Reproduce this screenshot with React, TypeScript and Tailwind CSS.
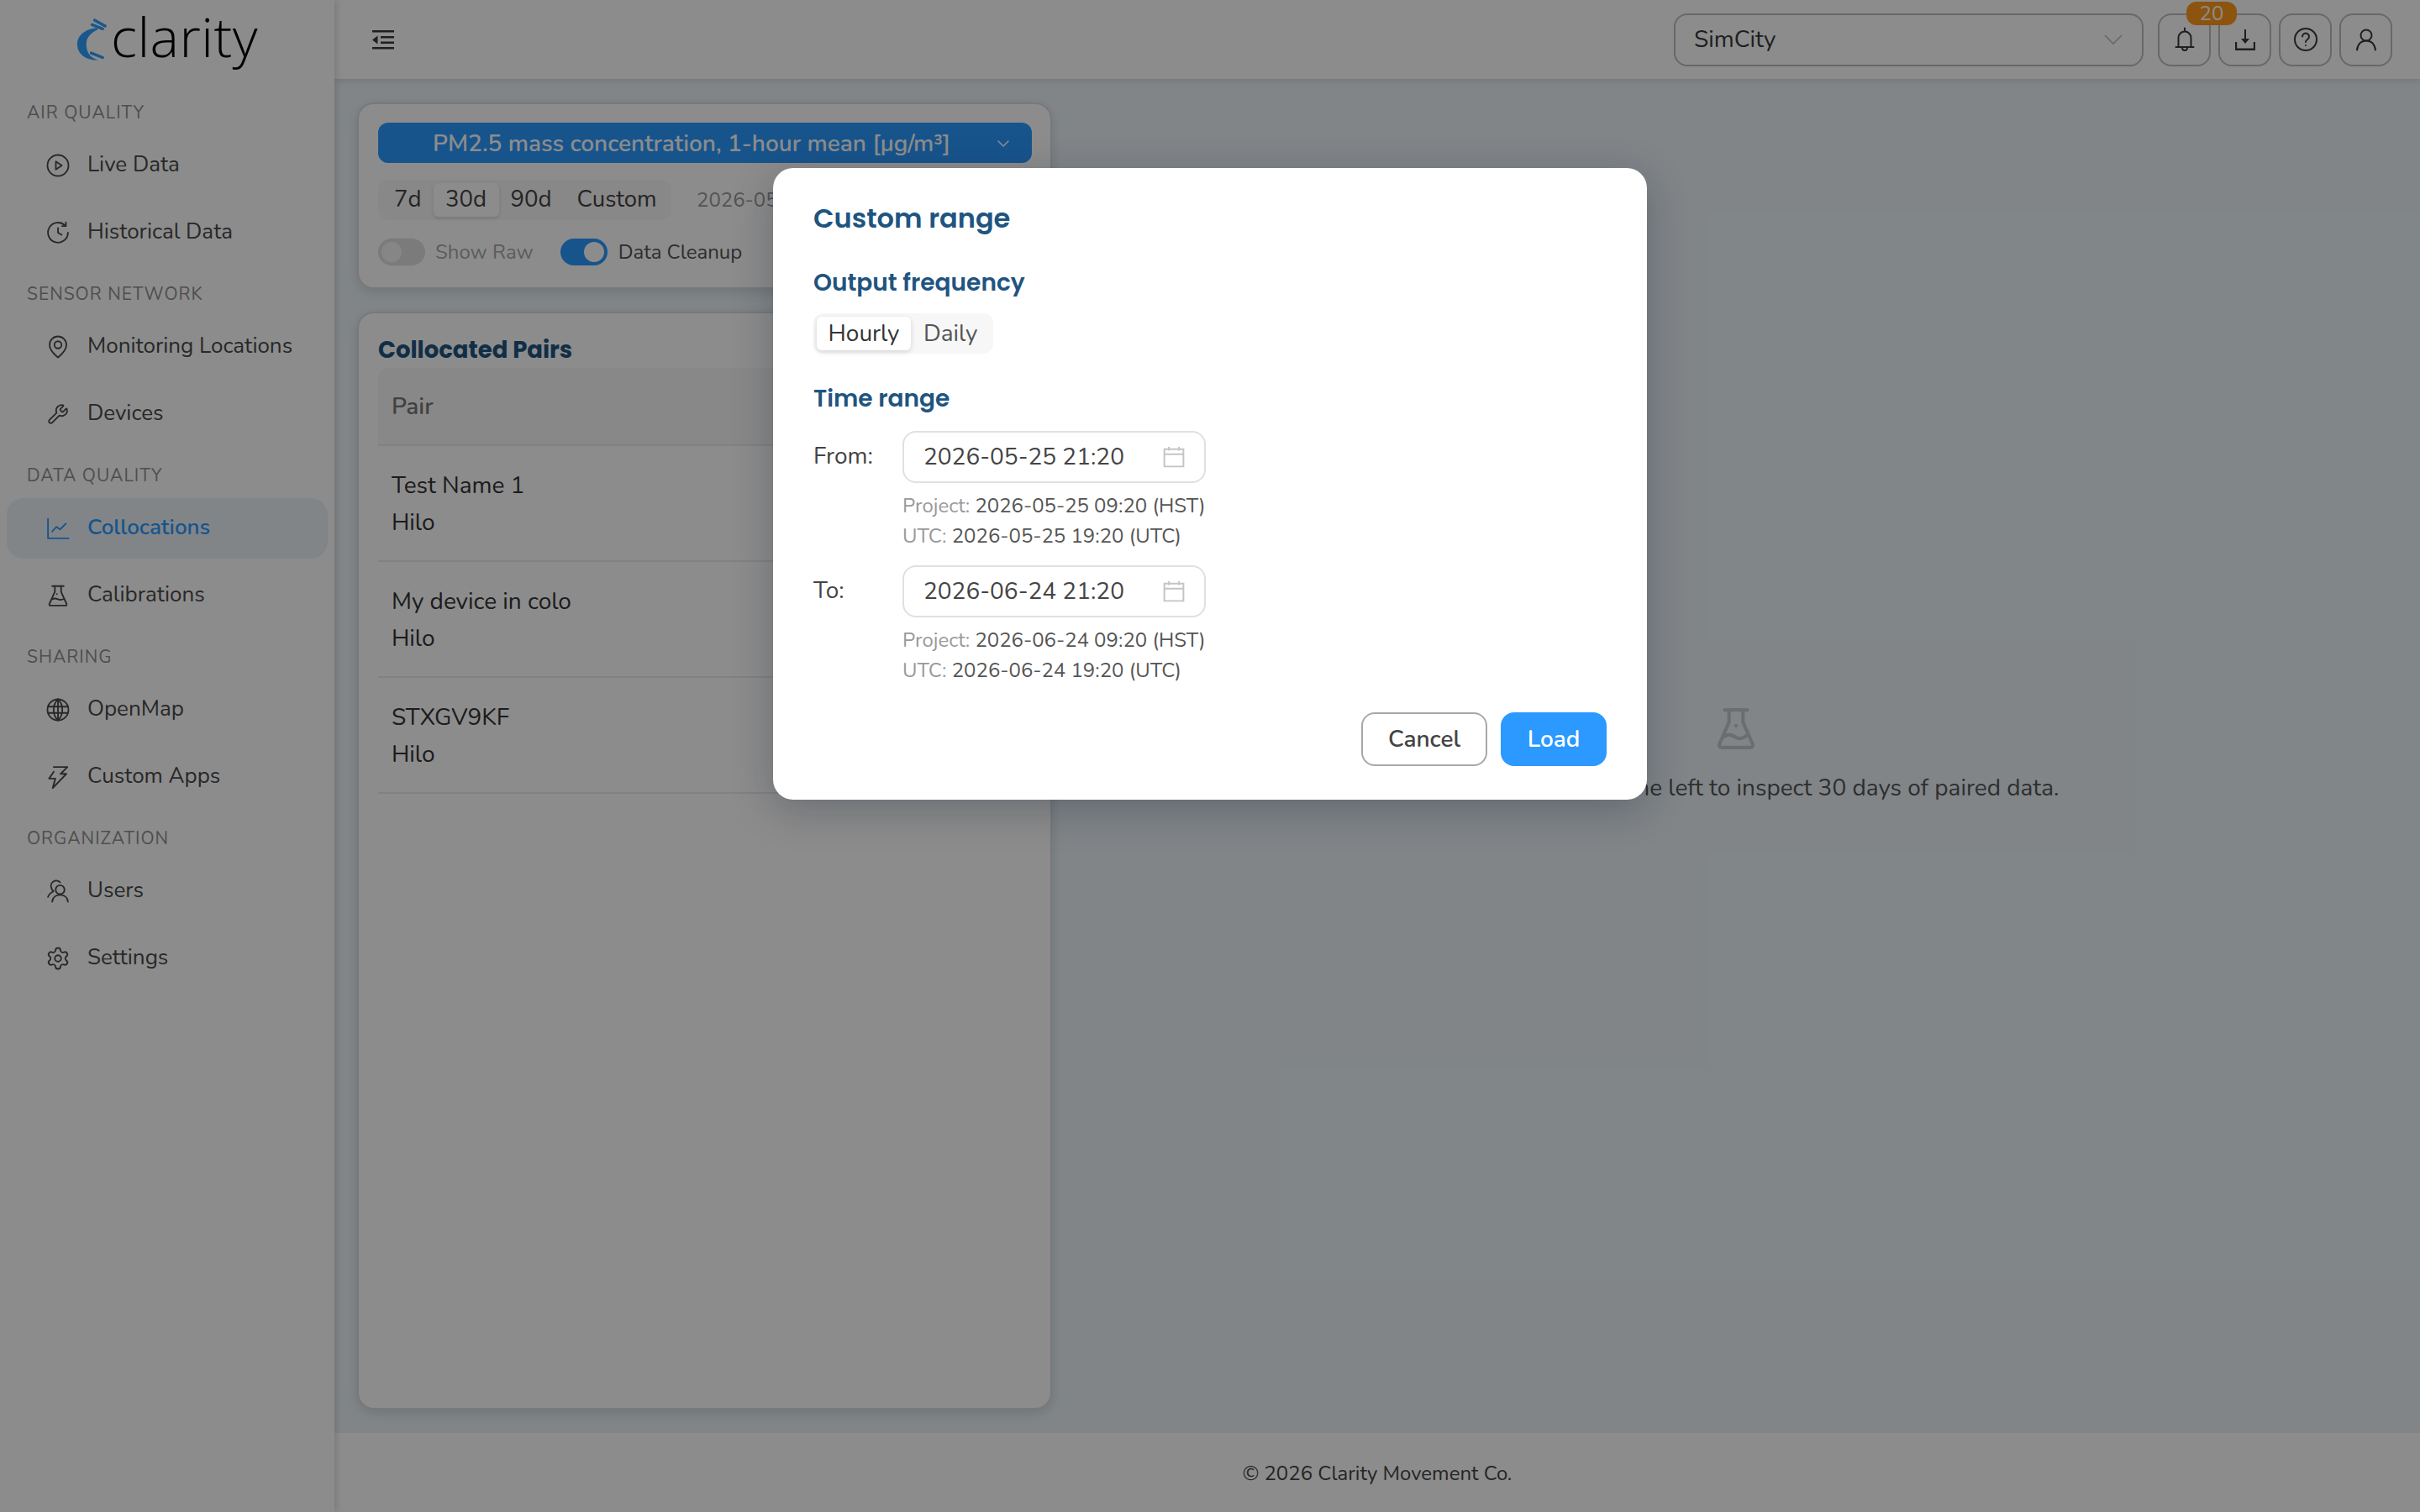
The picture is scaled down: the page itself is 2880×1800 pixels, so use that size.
import { ChevronDown, Settings, Wrench } from "lucide-react";

const nav = [
  { label: "AIR QUALITY", items: [{ name: "Live Data", icon: "play" }, { name: "Historical Data", icon: "history" }] },
  { label: "SENSOR NETWORK", items: [{ name: "Monitoring Locations", icon: "pin" }, { name: "Devices", icon: "tool" }] },
  { label: "DATA QUALITY", items: [{ name: "Collocations", icon: "chart", active: true }, { name: "Calibrations", icon: "flask" }] },
  { label: "SHARING", items: [{ name: "OpenMap", icon: "globe" }, { name: "Custom Apps", icon: "bolt" }] },
  { label: "ORGANIZATION", items: [{ name: "Users", icon: "users" }, { name: "Settings", icon: "gear" }] },
];

function NavIcon({ name }: { name: string }) {
  const common = { width: 30, height: 30, viewBox: "0 0 24 24", fill: "none", stroke: "currentColor", strokeWidth: 1.5, strokeLinecap: "round" as const, strokeLinejoin: "round" as const };
  switch (name) {
    case "play":
      return <svg {...common}><circle cx="12" cy="12" r="10" /><path d="M10 8.200v7.600l5.600-3.800z" /></svg>;
    case "history":
      return <svg {...common}><path d="M21.500 12a9.500 9.500 0 1 1-3-7" /><path d="M19.500 2.200v3.500h-3.500" /><path d="M12 7.500V12l3.500 2" /></svg>;
    case "pin":
      return <svg {...common}><path d="M12 22c-1-1-8-5.800-8-12a8 8 0 0 1 16 0c0 6.200-7 11-8 12z" /><circle cx="12" cy="10" r="3.400" /></svg>;
    case "tool":
      return <Wrench size={26} strokeWidth={1.7} className="mx-[2px] -scale-x-100 rotate-90" />;
    case "chart":
      return <svg {...common}><path d="M2.500 3v18.500H22" /><path d="M6.500 15l4-4.500 3.500 2.500 5.500-5.500" /></svg>;
    case "flask":
      return <svg {...common}><path d="M6.500 3h11" /><path d="M9 3v5.500L3.800 20c-.3.900.2 1.500 1 1.500h14.400c.8 0 1.300-.6 1-1.500L15 8.500V3" /><path d="M6.500 15.500c2-1.300 3.500-.8 5.500 0s3.500.8 5.500-.3" /><path d="M11 10.500v.1" /></svg>;
    case "globe":
      return <svg {...common}><circle cx="12" cy="12" r="10" /><path d="M2.500 9h19M2.500 15h19M12 2v20" /><path d="M12 2c-5.500 5-5.500 15 0 20M12 2c5.500 5 5.500 15 0 20" /></svg>;
    case "bolt":
      return <svg {...common}><path d="M8 2.500h13L14.500 9H20L7 22.500l2.500-9H3.500L8 7" /></svg>;
    case "users":
      return <svg {...common}><circle cx="14" cy="10.500" r="4.200" /><path d="M6.500 22c.5-4 3.500-6.500 7.500-6.500s7 2.500 7.500 6.500" /><path d="M14 3.500A5 5 0 0 0 5.800 9c.1 1.300 1 2.300 2 3C5 13.500 3 15.500 2.500 17.500" /></svg>;
    default:
      return <Settings size={30} strokeWidth={1.5} />;
  }
}

function Sidebar() {
  return (
    <aside className="w-[398px] shrink-0 bg-white shadow-[2px_0_8px_rgba(0,0,0,0.15)] z-10">
      <div className="h-[109px] flex items-start pl-[90px]">
        <svg width="42" height="56" viewBox="0 0 43 56" className="mt-[20px]">
          <path d="M26 13C12 14 2 22 2 33C2 45 14 53 28 52C18 50 13 42 13 33C13 25 18 19 27 15Z" fill="#2e9fff" />
          <path d="M23 3.500L36 10.500M20 9L33 14M19 43.500L33 49" fill="none" stroke="#2e9fff" strokeWidth="3.500" strokeLinecap="round" />
        </svg>
        <span className="font-['Open_Sans',sans-serif] font-light text-[65px] leading-[72px] text-black tracking-[0.5px] mt-[7px]">clarity</span>
      </div>
      {nav.map((group) => (
        <div key={group.label} className="mb-[12px]">
          <div className="h-[52px] flex items-center pl-[32px] text-[21px] tracking-[1px] text-[#8f8f8f]">{group.label}</div>
          <div className="flex flex-col gap-[8px]">
            {group.items.map((item: { name: string; icon: string; active?: boolean }) => (
              <div
                key={item.name}
                className={`mx-[8px] h-[72px] rounded-[20px] flex items-center pl-[46px] gap-[20px] text-[26px] ${item.active ? "bg-[#ebf3f7] text-[#2b99ff] font-semibold" : "text-[#4a4a4a]"}`}
              >
                <NavIcon name={item.icon} />
                <span className="pb-[3px]">{item.name}</span>
              </div>
            ))}
          </div>
        </div>
      ))}
    </aside>
  );
}

function IconButton({ children }: { children: React.ReactNode }) {
  return (
    <button className="w-[63px] h-[63px] rounded-[16px] border-2 border-[#bdbdbd] flex items-center justify-center text-[#3a3a3a]">
      {children}
    </button>
  );
}

function Topbar() {
  return (
    <header className="h-[94px] shrink-0 bg-white shadow-[0_2px_8px_rgba(0,0,0,0.12)] flex items-center pl-[45px] pr-[33px] z-[5]">
      <svg width="26" height="24" viewBox="0 0 26 24" fill="#3a3a3a">
        <path d="M0 1h26v2.500H0zM10 8h16v2.500H10zM10 14.500h16v2.500H10zM0 21h26v2.500H0zM0 12.500L6.500 7.500v10z" />
      </svg>
      <div className="ml-auto w-[559px] h-[63px] rounded-[16px] border-2 border-[#bdbdbd] flex items-center justify-between pl-[22px] pr-[23px] text-[28px] text-[#3a3a3a]">
        <span>SimCity</span>
        <svg width="22" height="12" viewBox="0 0 22 12" fill="none" stroke="#bdbdbd" strokeWidth="1.600"><path d="M1 1l10 10L21 1" /></svg>
      </div>
      <div className="relative flex gap-[9px] ml-[17px]">
        <IconButton>
          <svg width="24" height="30" viewBox="0 0 24 30" fill="none" stroke="currentColor" strokeWidth="2" strokeLinecap="round" strokeLinejoin="round">
            <path d="M12 1.500v3M4.500 24V13a7.500 7.500 0 0 1 15 0v11M1.500 24h21M9 25a3 3 0 0 0 6 0" />
          </svg>
        </IconButton>
        <IconButton>
          <svg width="26" height="26" viewBox="0 0 26 26" fill="currentColor">
            <path d="M12 1h2v11h4l-5 6-5-6h4zM1 16h2.200v7.500h19.600V16H25v10H1z" />
          </svg>
        </IconButton>
        <IconButton>
          <svg width="30" height="30" viewBox="0 0 30 30" fill="none" stroke="currentColor" strokeWidth="2" strokeLinecap="round" strokeLinejoin="round">
            <circle cx="15" cy="15" r="13" />
            <path d="M11 11.500a4 4 0 1 1 6 3.500c-1.300.8-2 1.500-2 3M15 22v.1" />
          </svg>
        </IconButton>
        <IconButton>
          <svg width="26" height="27" viewBox="0 0 26 27" fill="none" stroke="currentColor" strokeWidth="2" strokeLinecap="round" strokeLinejoin="round">
            <circle cx="13" cy="8" r="6.500" />
            <path d="M2 25.500c1-7 5-11 11-11s10 4 11 11" />
          </svg>
        </IconButton>
        <span className="absolute left-[34px] top-[-14px] w-[60px] h-[28px] rounded-[12px] bg-[#ff9a1a] text-white text-[24px] leading-[28px] text-center">20</span>
      </div>
    </header>
  );
}

function Toggle({ on }: { on?: boolean }) {
  return (
    <span className={`w-[56px] h-[32px] rounded-full flex items-center px-[4px] ${on ? "bg-[#2b99ff] justify-end" : "bg-[#e0e0e0]"}`}>
      <span className={`w-[24px] h-[24px] rounded-full ${on ? "bg-white" : "bg-[#f5f5f5]"}`} />
    </span>
  );
}

function LeftColumn() {
  return (
    <div className="w-[827px] shrink-0 flex flex-col gap-[27px]">
      <section className="h-[222px] rounded-[20px] bg-white border-2 border-[#dcdcdc] shadow-[0_4px_14px_rgba(0,30,60,0.14)] pl-[23px] pr-[22px] pt-[22px]">
        <div className="h-[48px] rounded-[12px] bg-[#2b99ff] flex items-center justify-between pl-[65px] pr-[22px] pt-[2px] text-white font-semibold text-[28px]">
          <span>PM2.5 mass concentration, 1-hour mean [μg/m³]</span>
          <ChevronDown size={24} strokeWidth={1.600} />
        </div>
        <div className="mt-[20px] flex items-center">
          <div className="h-[48px] w-[349px] rounded-[12px] bg-[#f7f7f7] flex items-center text-[27.5px] text-[#444] shrink-0">
            <span className="ml-[19px]">7d</span>
            <span className="ml-[14px] w-[78px] h-[40px] rounded-[6px] bg-white shadow-[0_2px_4px_rgba(0,0,0,0.12)] flex items-center justify-center">30d</span>
            <span className="ml-[14px]">90d</span>
            <span className="ml-[30px]">Custom</span>
          </div>
          <span className="ml-[30px] text-[24px] text-[#999] whitespace-nowrap">2026-05-</span>
        </div>
        <div className="mt-[20px] flex items-center text-[24px]">
          <Toggle />
          <span className="ml-[12px] text-[#a8a8a8]">Show Raw</span>
          <span className="ml-[32px]"><Toggle on /></span>
          <span className="ml-[13px] text-[#555]">Data Cleanup</span>
        </div>
      </section>
      <section className="flex-1 rounded-[20px] bg-white border-2 border-[#dcdcdc] shadow-[0_4px_14px_rgba(0,30,60,0.14)] pl-[23px] pr-[22px]">
        <h2 className="font-['Poppins','Inter',sans-serif] font-bold text-[27.5px] leading-[36px] pt-[26px] text-[#205480] box-content">Collocated Pairs</h2>
        <div className="mt-[3px] h-[93px] rounded-t-[12px] bg-[#f7f7f7] border-b-2 border-[#ececec] pl-[16px] pt-[26px] text-[28px] leading-[40px] font-semibold text-[#777]">Pair</div>
        {["Test Name 1", "My device in colo", "STXGV9KF"].map((n) => (
          <div key={n} className="h-[138px] border-b-2 border-[#ececec] pl-[16px] pt-[25px] text-[28px] leading-[44px] text-[#333]">
            <div>{n}</div>
            <div>Hilo</div>
          </div>
        ))}
      </section>
    </div>
  );
}

function Modal() {
  const heading = "font-['Poppins','Inter',sans-serif] font-semibold text-[#205480]";
  const dateRow = (label: string, value: string, project: string, utc: string) => (
    <div className="flex">
      <div className="w-[106px] pt-[10px] text-[28px] leading-[40px] text-[#444]">{label}</div>
      <div className="w-[361px]">
        <div className="h-[62px] rounded-[16px] border-2 border-[#e0e0e0] flex items-center justify-between pl-[23px] pr-[23px] text-[28px] text-[#444]">
          <span>{value}</span>
          <svg width="26" height="26" viewBox="0 0 24 24" fill="none" stroke="#c4c4c4" strokeWidth="1.800"><path d="M1.500 3.500h21v19h-21zM1.500 9h21M6.500 1v4M17.500 1v4" /></svg>
        </div>
        <div className="mt-[9px] text-[24px] leading-[36px] text-[#555] whitespace-nowrap">
          <div><span className="text-[#999]">Project:</span> {project}</div>
          <div><span className="text-[#999]">UTC:</span> {utc}</div>
        </div>
      </div>
    </div>
  );
  return (
    <div className="absolute left-[920px] top-[200px] w-[1040px] h-[752px] rounded-[24px] bg-white px-[48px] shadow-[0_12px_48px_rgba(0,20,40,0.25)]">
      <h3 className={`${heading} text-[32px] leading-[44px] pt-[38px] box-content`}>Custom range</h3>
      <h4 className={`${heading} text-[28px] leading-[40px] mt-[35px]`}>Output frequency</h4>
      <div className="mt-[16px] w-[214px] h-[48px] rounded-[12px] bg-[#f7f7f7] flex items-center text-[28px] text-[#444]">
        <span className="ml-[4px] w-[112px] h-[40px] rounded-[6px] bg-white shadow-[0_2px_6px_rgba(0,0,0,0.14)] flex items-center justify-center text-[#333]">Hourly</span>
        <span className="ml-[15px] text-[#555]">Daily</span>
      </div>
      <h4 className={`${heading} text-[28px] leading-[40px] mt-[34px]`}>Time range</h4>
      <div className="mt-[18px] flex flex-col gap-[17px]">
        {dateRow("From:", "2026-05-25 21:20", "2026-05-25 09:20 (HST)", "2026-05-25 19:20 (UTC)")}
        {dateRow("To:", "2026-06-24 21:20", "2026-06-24 09:20 (HST)", "2026-06-24 19:20 (UTC)")}
      </div>
      <div className="absolute right-[48px] bottom-[40px] flex gap-[16px] text-[28px] font-semibold">
        <button className="w-[150px] h-[64px] rounded-[16px] border-2 border-[#a8a8a8] text-[#444]">Cancel</button>
        <button className="w-[126px] h-[64px] rounded-[16px] bg-[#2b99ff] text-white">Load</button>
      </div>
    </div>
  );
}

export default function App() {
  return (
    <div className="relative w-[2880px] h-[1800px] overflow-hidden flex bg-[#ebf3f7] font-['Nunito','Noto_Sans',sans-serif]">
      <Sidebar />
      <div className="flex-1 min-w-0 flex flex-col">
        <Topbar />
        <main className="flex-1 min-h-0 flex gap-[24px] pl-[27px] pr-[24px] py-[28px]">
          <LeftColumn />
          <div className="flex-1 flex flex-col items-center pt-[719px] text-[#555]">
            <svg width="50" height="52" viewBox="0 0 24 25" fill="none" stroke="#c4c9cc" strokeWidth="2" strokeLinecap="round" strokeLinejoin="round">
              <path d="M5.500 2h13" />
              <path d="M8 2v7L2.500 21.500c-.4 1 .2 2 1.300 2h16.400c1.100 0 1.700-1 1.300-2L16 9V2" />
              <path d="M5 17.500c2.500-2 4-1.500 6.500 0s4 1 7-1" />
              <path d="M12 11v.1" />
            </svg>
            <p className="mt-[24px] text-[28px] whitespace-nowrap">Select a test pair on the left to inspect 30 days of paired data.</p>
          </div>
        </main>
        <footer className="h-[94px] shrink-0 bg-white flex items-center justify-center pt-[2px] text-[24px] text-[#444]">© 2026 Clarity Movement Co.</footer>
      </div>
      {/* modal mask */}
      <div className="absolute inset-0 z-20 bg-black/45" />
      <div className="absolute inset-0 z-30">
        <Modal />
      </div>
    </div>
  );
}
